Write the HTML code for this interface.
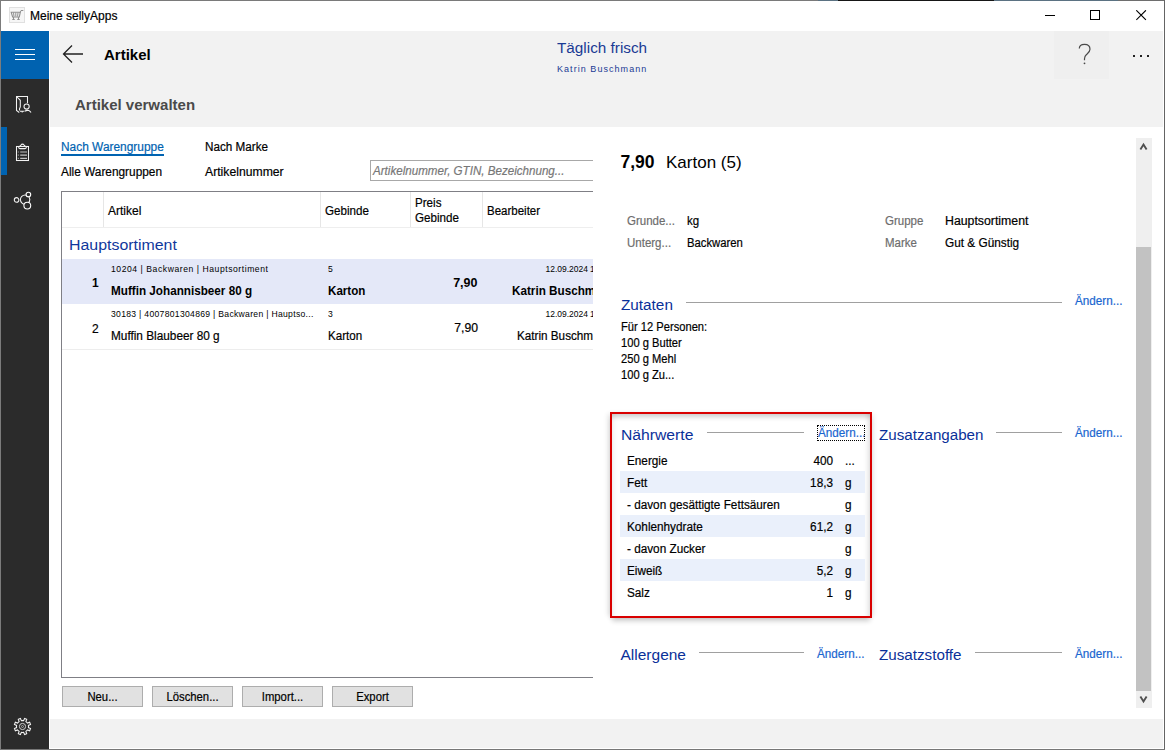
<!DOCTYPE html>
<html><head><meta charset="utf-8"><style>
html,body{margin:0;padding:0;width:1165px;height:750px;overflow:hidden;background:#fff;position:relative}
.t{position:absolute;white-space:nowrap;font-family:"Liberation Sans", sans-serif;line-height:normal}
.s{-webkit-text-stroke:0.2px currentColor}
svg{display:block}
</style></head><body>
<div style="position:absolute;left:0px;top:0px;width:1165px;height:750px;background:#ffffff;"></div>
<div style="position:absolute;left:50px;top:31px;width:1113px;height:96px;background:#f2f2f2;"></div>
<div style="position:absolute;left:50px;top:719px;width:1113px;height:29px;background:#f2f2f2;"></div>
<div style="position:absolute;left:0px;top:0px;width:818px;height:1px;background:#7a7a7a;"></div>
<div style="position:absolute;left:818px;top:0px;width:20px;height:1px;background:#5b7282;"></div>
<div style="position:absolute;left:838px;top:0px;width:156px;height:1px;background:#161616;"></div>
<div style="position:absolute;left:994px;top:0px;width:124px;height:1px;background:#5b7282;"></div>
<div style="position:absolute;left:1118px;top:0px;width:47px;height:1px;background:#6e6e6e;"></div>
<div style="position:absolute;left:0px;top:0px;width:1px;height:750px;background:#7c7c7c;"></div>
<div style="position:absolute;left:1164px;top:0px;width:1px;height:750px;background:#646464;"></div>
<div style="position:absolute;left:0px;top:749px;width:1165px;height:1px;background:#777777;"></div>
<svg style="position:absolute;left:9px;top:7px;" width="16" height="16" viewBox="0 0 16 16"><rect x="0.5" y="0.5" width="15" height="15" fill="#f6f6f6" stroke="#e0e0e0"/><path d="M2.2 5.2 L11.3 5.2 L10.3 10 L3.6 10 Z" fill="none" stroke="#8f8f8f" stroke-width="1.1"/><path d="M4.5 5.5 L5 9.5 M6.8 5.5 L6.8 9.5 M9 5.5 L8.6 9.5 M11.2 5.5 L12 3.5 L14.3 3.5" stroke="#8f8f8f" stroke-width="1" fill="none"/><path d="M4.5 10 L4.5 12.3 M9.5 10 L9.5 12.3 M3.3 12.5 L5.7 12.5 M8.3 12.5 L10.7 12.5" stroke="#8f8f8f" stroke-width="1.1" fill="none"/></svg>
<div class="t s" style="top:9px;font-size:12.5px;font-weight:400;color:#000;left:30px;transform-origin:0 0;transform:scaleX(0.9600);">Meine sellyApps</div>
<div style="position:absolute;left:1045px;top:15px;width:10px;height:1px;background:#000;"></div>
<svg style="position:absolute;left:1090px;top:10px;" width="11" height="11" viewBox="0 0 11 11"><rect x="0.5" y="0.5" width="9" height="9" fill="none" stroke="#000" stroke-width="1"/></svg>
<svg style="position:absolute;left:1136px;top:10px;" width="11" height="11" viewBox="0 0 11 11"><path d="M0.3 0.3 L9.9 9.9 M9.9 0.3 L0.3 9.9" stroke="#000" stroke-width="1.15" fill="none"/></svg>
<div style="position:absolute;left:1px;top:31px;width:48px;height:48px;background:#0062b0;"></div>
<div style="position:absolute;left:1px;top:79px;width:48px;height:670px;background:#2b2b2b;"></div>
<div style="position:absolute;left:15px;top:49px;width:20px;height:1px;background:#ffffff;"></div>
<div style="position:absolute;left:15px;top:54px;width:20px;height:1px;background:#ffffff;"></div>
<div style="position:absolute;left:15px;top:59px;width:20px;height:1px;background:#ffffff;"></div>
<div style="position:absolute;left:1px;top:127px;width:6px;height:48px;background:#0063b1;"></div>
<svg style="position:absolute;left:15px;top:95px;" width="18" height="19" viewBox="0 0 18 19"><path d="M12.5 8.3 L12.5 1.5 L1.5 1.5 L1.5 15.5 L4.3 17.5 M2 2 L5.3 5.3 L5.3 12 L4.5 13.8 L4.5 15.6 M5 16.3 L7.2 16.3 L7.2 17.5 M7.2 16.3 L9.2 16.3" stroke="#f2f2f2" stroke-width="1.05" fill="none"/><circle cx="11.6" cy="11.5" r="2.6" stroke="#f2f2f2" stroke-width="1.05" fill="none"/><path d="M9.6 16.2 Q11.8 15 13.8 15.5 Q15.2 16 16 17.6" stroke="#f2f2f2" stroke-width="1.05" fill="none"/></svg>
<svg style="position:absolute;left:15px;top:143px;" width="16" height="20" viewBox="0 0 16 20"><rect x="1.5" y="3.5" width="12" height="14" stroke="#f2f2f2" stroke-width="1.05" fill="none"/><path d="M3.5 3.5 Q5.3 3.5 5.8 2.2 Q7.5 0 9.2 2.2 Q9.7 3.5 11.5 3.5" stroke="#f2f2f2" stroke-width="1.05" fill="none"/><path d="M3.6 4 Q3.6 5.6 5 5.6 L10 5.6 Q11.4 5.6 11.4 4" stroke="#f2f2f2" stroke-width="1.05" fill="none"/><path d="M5.2 9 L12 9 M5.2 12.2 L12 12.2 M5.2 15.3 L12 15.3" stroke="#c4c4c4" stroke-width="1.2" fill="none"/><path d="M2.8 9 L3.8 9 M2.8 12.2 L3.8 12.2 M2.8 15.3 L3.8 15.3" stroke="#aaaaaa" stroke-width="1.2" fill="none"/></svg>
<svg style="position:absolute;left:13px;top:191px;" width="20" height="20" viewBox="0 0 20 20"><circle cx="3.6" cy="8.9" r="2.3" stroke="#f2f2f2" stroke-width="1.05" fill="none"/><circle cx="12.1" cy="8.6" r="4.7" stroke="#f2f2f2" stroke-width="1.05" fill="none"/><circle cx="15.4" cy="3.5" r="2.3" stroke="#ffffff" stroke-width="1.1" fill="#2b2b2b"/><circle cx="14.3" cy="14.6" r="3.4" stroke="#ffffff" stroke-width="1.1" fill="#2b2b2b"/></svg>
<svg style="position:absolute;left:13px;top:717px;" width="19" height="19" viewBox="0 0 19 19"><polygon points="9.50,3.50 10.59,3.60 11.58,1.46 13.71,2.35 12.90,4.56 13.74,5.26 14.44,6.10 16.65,5.29 17.54,7.42 15.40,8.41 15.50,9.50 15.40,10.59 17.54,11.58 16.65,13.71 14.44,12.90 13.74,13.74 12.90,14.44 13.71,16.65 11.58,17.54 10.59,15.40 9.50,15.50 8.41,15.40 7.42,17.54 5.29,16.65 6.10,14.44 5.26,13.74 4.56,12.90 2.35,13.71 1.46,11.58 3.60,10.59 3.50,9.50 3.60,8.41 1.46,7.42 2.35,5.29 4.56,6.10 5.26,5.26 6.10,4.56 5.29,2.35 7.42,1.46 8.41,3.60" stroke="#f2f2f2" stroke-width="1.05" fill="none"/><circle cx="9.5" cy="9.5" r="3.1" stroke="#d0d0d0" stroke-width="1" fill="none"/><circle cx="9.5" cy="9.5" r="1" stroke="#bbbbbb" stroke-width="0.8" fill="none"/></svg>
<svg style="position:absolute;left:62px;top:44px;" width="23" height="21" viewBox="0 0 23 21"><path d="M1.5 10 L21 10 M10 1.5 L1.5 10 L10 18.5" stroke="#222" stroke-width="1.3" fill="none"/></svg>
<div class="t" style="top:46px;font-size:15px;font-weight:700;color:#000;left:104px;transform-origin:0 0;">Artikel</div>
<div class="t" style="top:39px;font-size:15.5px;font-weight:400;color:#1a3a94;left:557px;transform-origin:0 0;transform:scaleX(0.9871);">Täglich frisch</div>
<div class="t" style="top:64px;font-size:9px;font-weight:400;color:#1a3a94;letter-spacing:1.050px;left:557px;transform-origin:0 0;">Katrin Buschmann</div>
<div style="position:absolute;left:1054px;top:31px;width:55px;height:48px;background:#efefef;"></div>
<svg style="position:absolute;left:1074px;top:40px;" width="22" height="28" viewBox="0 0 22 28"><path d="M5.3 8.5 C5.3 5.5 7.5 4.3 10.5 4.3 C13.8 4.3 16 6.2 16 9.2 C16 11.8 14.3 13 12.5 14.5 C11 15.8 10.5 17 10.5 18.8 L10.5 20.3" stroke="#4a4a4a" stroke-width="1.2" fill="none"/><circle cx="10.5" cy="23.3" r="0.9" fill="#4a4a4a"/></svg>
<div style="position:absolute;left:1133px;top:55px;width:2px;height:2px;background:#222;"></div>
<div style="position:absolute;left:1140px;top:55px;width:2px;height:2px;background:#222;"></div>
<div style="position:absolute;left:1147px;top:55px;width:2px;height:2px;background:#222;"></div>
<div class="t" style="top:96px;font-size:15px;font-weight:700;color:#4a4a4a;left:75px;transform-origin:0 0;">Artikel verwalten</div>
<div class="t s" style="top:140px;font-size:12.5px;font-weight:400;color:#0063b1;left:61px;transform-origin:0 0;transform:scaleX(0.9520);">Nach Warengruppe</div>
<div style="position:absolute;left:61px;top:154px;width:103px;height:2px;background:#0063b1;"></div>
<div class="t s" style="top:140px;font-size:12.5px;font-weight:400;color:#000;left:205px;transform-origin:0 0;transform:scaleX(0.9360);">Nach Marke</div>
<div class="t s" style="top:165px;font-size:12.5px;font-weight:400;color:#000;left:61px;transform-origin:0 0;transform:scaleX(0.9480);">Alle Warengruppen</div>
<div class="t s" style="top:165px;font-size:12.5px;font-weight:400;color:#000;left:205px;transform-origin:0 0;transform:scaleX(0.9760);">Artikelnummer</div>
<div style="position:absolute;left:0;top:0;width:593px;height:750px;overflow:hidden">
<div style="position:absolute;left:370px;top:160px;width:230px;height:21px;background:#ffffff;box-sizing:border-box;border:1px solid #a8a8a8;"></div>
<div class="t s" style="top:164px;font-size:12.5px;font-weight:400;color:#777;left:373px;transform-origin:0 0;transform:scaleX(0.9280);font-style:italic;">Artikelnummer, GTIN, Bezeichnung...</div>
<div style="position:absolute;left:61px;top:191px;width:600px;height:487px;background:#ffffff;box-sizing:border-box;border:1px solid #7f7f85;"></div>
<div style="position:absolute;left:103px;top:192px;width:1px;height:35px;background:#e6e6e6;"></div>
<div style="position:absolute;left:320px;top:192px;width:1px;height:35px;background:#e6e6e6;"></div>
<div style="position:absolute;left:410px;top:192px;width:1px;height:35px;background:#e6e6e6;"></div>
<div style="position:absolute;left:482px;top:192px;width:1px;height:35px;background:#e6e6e6;"></div>
<div style="position:absolute;left:62px;top:227px;width:540px;height:1px;background:#eeeeee;"></div>
<div class="t s" style="top:204px;font-size:12.5px;font-weight:400;color:#000;left:108px;transform-origin:0 0;transform:scaleX(0.9600);">Artikel</div>
<div class="t s" style="top:204px;font-size:12.5px;font-weight:400;color:#000;left:325px;transform-origin:0 0;transform:scaleX(0.9280);">Gebinde</div>
<div class="t s" style="top:196px;font-size:12.5px;font-weight:400;color:#000;left:415px;transform-origin:0 0;transform:scaleX(0.9280);">Preis</div>
<div class="t s" style="top:211px;font-size:12.5px;font-weight:400;color:#000;left:415px;transform-origin:0 0;transform:scaleX(0.9280);">Gebinde</div>
<div class="t s" style="top:204px;font-size:12.5px;font-weight:400;color:#000;left:487px;transform-origin:0 0;transform:scaleX(0.9200);">Bearbeiter</div>
<div class="t" style="top:236px;font-size:15.5px;font-weight:400;color:#0f379c;left:69px;transform-origin:0 0;transform:scaleX(1.0258);">Hauptsortiment</div>
<div style="position:absolute;left:62px;top:259px;width:540px;height:45px;background:#e4e8f8;"></div>
<div style="position:absolute;left:62px;top:349px;width:540px;height:1px;background:#ededed;"></div>
<div class="t" style="top:276px;font-size:12.5px;font-weight:700;color:#000;left:92px;transform-origin:0 0;transform:scaleX(0.9600);">1</div>
<div class="t" style="top:263px;font-size:9.8px;font-weight:400;color:#000;letter-spacing:0.627px;left:111px;transform-origin:0 0;transform:scaleX(0.8776);">10204 | Backwaren | Hauptsortiment</div>
<div class="t" style="top:284px;font-size:12.5px;font-weight:700;color:#000;left:111px;transform-origin:0 0;transform:scaleX(0.9360);">Muffin Johannisbeer 80 g</div>
<div class="t" style="top:263px;font-size:9.8px;font-weight:400;color:#000;left:328px;transform-origin:0 0;transform:scaleX(0.8776);">5</div>
<div class="t" style="top:284px;font-size:12.5px;font-weight:700;color:#000;left:328px;transform-origin:0 0;transform:scaleX(0.9280);">Karton</div>
<div class="t" style="top:276px;font-size:12.5px;font-weight:700;color:#000;left:-22.5px;width:500px;text-align:right;transform-origin:100% 0;">7,90</div>
<div class="t" style="top:263px;font-size:9.8px;font-weight:400;color:#000;left:87.5px;width:500px;text-align:right;transform-origin:100% 0;transform:scaleX(0.8673);">12.09.2024</div>
<div class="t" style="left:590px;top:264px;font-size:8.5px;">1</div>
<div class="t" style="top:284px;font-size:12.5px;font-weight:700;color:#000;left:512px;transform-origin:0 0;transform:scaleX(0.9360);">Katrin Buschmann</div>
<div class="t s" style="top:322px;font-size:12.5px;font-weight:400;color:#000;left:92px;transform-origin:0 0;transform:scaleX(0.9600);">2</div>
<div class="t" style="top:308px;font-size:9.8px;font-weight:400;color:#000;letter-spacing:0.342px;left:111px;transform-origin:0 0;transform:scaleX(0.8776);">30183 | 4007801304869 | Backwaren | Hauptso...</div>
<div class="t s" style="top:329px;font-size:12.5px;font-weight:400;color:#000;left:111px;transform-origin:0 0;transform:scaleX(0.9440);">Muffin Blaubeer 80 g</div>
<div class="t" style="top:308px;font-size:9.8px;font-weight:400;color:#000;left:328px;transform-origin:0 0;transform:scaleX(0.8776);">3</div>
<div class="t s" style="top:329px;font-size:12.5px;font-weight:400;color:#000;left:328px;transform-origin:0 0;transform:scaleX(0.9280);">Karton</div>
<div class="t s" style="top:321px;font-size:12.5px;font-weight:400;color:#000;left:-22.5px;width:500px;text-align:right;transform-origin:100% 0;transform:scaleX(0.9760);">7,90</div>
<div class="t" style="top:308px;font-size:9.8px;font-weight:400;color:#000;left:87.5px;width:500px;text-align:right;transform-origin:100% 0;transform:scaleX(0.8673);">12.09.2024</div>
<div class="t" style="left:590px;top:309px;font-size:8.5px;">1</div>
<div class="t s" style="top:329px;font-size:12.5px;font-weight:400;color:#000;left:516.5px;transform-origin:0 0;transform:scaleX(0.9360);">Katrin Buschmann</div>
</div>
<div style="position:absolute;left:62px;top:686px;width:81px;height:21px;background:#e1e1e1;box-sizing:border-box;border:1px solid #adadad;"></div>
<div class="t s" style="top:690px;font-size:12.5px;font-weight:400;color:#000;left:62.0px;width:81px;text-align:center;transform-origin:50% 0;transform:scaleX(0.9040);">Neu...</div>
<div style="position:absolute;left:152px;top:686px;width:81px;height:21px;background:#e1e1e1;box-sizing:border-box;border:1px solid #adadad;"></div>
<div class="t s" style="top:690px;font-size:12.5px;font-weight:400;color:#000;left:152.0px;width:81px;text-align:center;transform-origin:50% 0;transform:scaleX(0.9040);">Löschen...</div>
<div style="position:absolute;left:242px;top:686px;width:81px;height:21px;background:#e1e1e1;box-sizing:border-box;border:1px solid #adadad;"></div>
<div class="t s" style="top:690px;font-size:12.5px;font-weight:400;color:#000;left:242.0px;width:81px;text-align:center;transform-origin:50% 0;transform:scaleX(0.9040);">Import...</div>
<div style="position:absolute;left:332px;top:686px;width:81px;height:21px;background:#e1e1e1;box-sizing:border-box;border:1px solid #adadad;"></div>
<div class="t s" style="top:690px;font-size:12.5px;font-weight:400;color:#000;left:332.0px;width:81px;text-align:center;transform-origin:50% 0;transform:scaleX(0.9040);">Export</div>
<div class="t" style="top:152px;font-size:17.5px;font-weight:700;color:#000;left:620.5px;transform-origin:0 0;">7,90</div>
<div class="t" style="top:153px;font-size:17px;font-weight:400;color:#000;left:666px;transform-origin:0 0;">Karton (5)</div>
<div class="t s" style="top:214px;font-size:12.5px;font-weight:400;color:#6d6d6d;left:626.5px;transform-origin:0 0;transform:scaleX(0.9200);">Grunde...</div>
<div class="t s" style="top:214px;font-size:12.5px;font-weight:400;color:#000;left:686.5px;transform-origin:0 0;transform:scaleX(0.9200);">kg</div>
<div class="t s" style="top:236px;font-size:12.5px;font-weight:400;color:#6d6d6d;left:626.5px;transform-origin:0 0;transform:scaleX(0.9200);">Unterg...</div>
<div class="t s" style="top:236px;font-size:12.5px;font-weight:400;color:#000;left:686.5px;transform-origin:0 0;transform:scaleX(0.9040);">Backwaren</div>
<div class="t s" style="top:214px;font-size:12.5px;font-weight:400;color:#6d6d6d;left:884.5px;transform-origin:0 0;transform:scaleX(0.9200);">Gruppe</div>
<div class="t s" style="top:214px;font-size:12.5px;font-weight:400;color:#000;left:944.5px;transform-origin:0 0;transform:scaleX(0.9840);">Hauptsortiment</div>
<div class="t s" style="top:236px;font-size:12.5px;font-weight:400;color:#6d6d6d;left:884.5px;transform-origin:0 0;transform:scaleX(0.9200);">Marke</div>
<div class="t s" style="top:236px;font-size:12.5px;font-weight:400;color:#000;left:944.5px;transform-origin:0 0;transform:scaleX(0.9440);">Gut &amp; Günstig</div>
<div class="t" style="top:296px;font-size:15.5px;font-weight:400;color:#0a3099;left:620.5px;transform-origin:0 0;transform:scaleX(0.9871);">Zutaten</div>
<div style="position:absolute;left:686px;top:302px;width:376px;height:1px;background:#a0a0a0;"></div>
<div class="t s" style="top:294px;font-size:12.5px;font-weight:400;color:#1a66d0;left:1075px;transform-origin:0 0;transform:scaleX(0.9360);">Ändern...</div>
<div class="t s" style="top:320px;font-size:12.5px;font-weight:400;color:#000;left:620.5px;transform-origin:0 0;transform:scaleX(0.8920);">Für 12 Personen:</div>
<div class="t s" style="top:336px;font-size:12.5px;font-weight:400;color:#000;left:620.5px;transform-origin:0 0;transform:scaleX(0.8920);">100 g Butter</div>
<div class="t s" style="top:352px;font-size:12.5px;font-weight:400;color:#000;left:620.5px;transform-origin:0 0;transform:scaleX(0.8920);">250 g Mehl</div>
<div class="t s" style="top:368px;font-size:12.5px;font-weight:400;color:#000;left:620.5px;transform-origin:0 0;transform:scaleX(0.8920);">100 g Zu...</div>
<div style="position:absolute;left:610px;top:412px;width:262px;height:206px;background:#ffffff;box-sizing:border-box;border:2px solid #d90000;box-shadow:inset 0 6px 5px -3px rgba(0,0,0,0.2), inset -6px 0 5px -4px rgba(0,0,0,0.12), inset 6px 0 5px -4px rgba(0,0,0,0.06), -4px 0 5px -2px rgba(0,0,0,0.12), 0 5px 5px -2px rgba(0,0,0,0.2), 4px 0 5px -2px rgba(0,0,0,0.08);"></div>
<div class="t" style="top:426px;font-size:15.5px;font-weight:400;color:#0a3099;left:621px;transform-origin:0 0;transform:scaleX(1.0129);">Nährwerte</div>
<div style="position:absolute;left:707px;top:432px;width:97px;height:1px;background:#a0a0a0;"></div>
<div class="t s" style="top:426px;font-size:12.5px;font-weight:400;color:#1a66d0;left:818px;transform-origin:0 0;transform:scaleX(0.9360);">Ändern...</div>
<div style="position:absolute;left:817px;top:425px;width:48px;height:16px;background:transparent;box-sizing:border-box;border:1px dotted #000;"></div>
<div class="t s" style="top:454px;font-size:12.5px;font-weight:400;color:#000;left:626.5px;transform-origin:0 0;transform:scaleX(0.9400);">Energie</div>
<div class="t s" style="top:454px;font-size:12.5px;font-weight:400;color:#000;left:332.5px;width:500px;text-align:right;transform-origin:100% 0;transform:scaleX(0.9400);">400</div>
<div class="t s" style="top:454px;font-size:12.5px;font-weight:400;color:#000;left:845px;transform-origin:0 0;transform:scaleX(0.9400);">...</div>
<div style="position:absolute;left:620px;top:471px;width:245px;height:22px;background:#eaf0fb;"></div>
<div class="t s" style="top:476px;font-size:12.5px;font-weight:400;color:#000;left:626.5px;transform-origin:0 0;transform:scaleX(0.9400);">Fett</div>
<div class="t s" style="top:476px;font-size:12.5px;font-weight:400;color:#000;left:332.5px;width:500px;text-align:right;transform-origin:100% 0;transform:scaleX(0.9400);">18,3</div>
<div class="t s" style="top:476px;font-size:12.5px;font-weight:400;color:#000;left:845px;transform-origin:0 0;transform:scaleX(0.9400);">g</div>
<div class="t s" style="top:498px;font-size:12.5px;font-weight:400;color:#000;left:626.5px;transform-origin:0 0;transform:scaleX(0.9400);">- davon gesättigte Fettsäuren</div>
<div class="t s" style="top:498px;font-size:12.5px;font-weight:400;color:#000;left:845px;transform-origin:0 0;transform:scaleX(0.9400);">g</div>
<div style="position:absolute;left:620px;top:515px;width:245px;height:22px;background:#eaf0fb;"></div>
<div class="t s" style="top:520px;font-size:12.5px;font-weight:400;color:#000;left:626.5px;transform-origin:0 0;transform:scaleX(0.9400);">Kohlenhydrate</div>
<div class="t s" style="top:520px;font-size:12.5px;font-weight:400;color:#000;left:332.5px;width:500px;text-align:right;transform-origin:100% 0;transform:scaleX(0.9400);">61,2</div>
<div class="t s" style="top:520px;font-size:12.5px;font-weight:400;color:#000;left:845px;transform-origin:0 0;transform:scaleX(0.9400);">g</div>
<div class="t s" style="top:542px;font-size:12.5px;font-weight:400;color:#000;left:626.5px;transform-origin:0 0;transform:scaleX(0.9400);">- davon Zucker</div>
<div class="t s" style="top:542px;font-size:12.5px;font-weight:400;color:#000;left:845px;transform-origin:0 0;transform:scaleX(0.9400);">g</div>
<div style="position:absolute;left:620px;top:559px;width:245px;height:22px;background:#eaf0fb;"></div>
<div class="t s" style="top:564px;font-size:12.5px;font-weight:400;color:#000;left:626.5px;transform-origin:0 0;transform:scaleX(0.9400);">Eiweiß</div>
<div class="t s" style="top:564px;font-size:12.5px;font-weight:400;color:#000;left:332.5px;width:500px;text-align:right;transform-origin:100% 0;transform:scaleX(0.9400);">5,2</div>
<div class="t s" style="top:564px;font-size:12.5px;font-weight:400;color:#000;left:845px;transform-origin:0 0;transform:scaleX(0.9400);">g</div>
<div class="t s" style="top:586px;font-size:12.5px;font-weight:400;color:#000;left:626.5px;transform-origin:0 0;transform:scaleX(0.9400);">Salz</div>
<div class="t s" style="top:586px;font-size:12.5px;font-weight:400;color:#000;left:332.5px;width:500px;text-align:right;transform-origin:100% 0;transform:scaleX(0.9400);">1</div>
<div class="t s" style="top:586px;font-size:12.5px;font-weight:400;color:#000;left:845px;transform-origin:0 0;transform:scaleX(0.9400);">g</div>
<div class="t" style="top:426px;font-size:15.5px;font-weight:400;color:#0a3099;left:878.5px;transform-origin:0 0;transform:scaleX(0.9774);">Zusatzangaben</div>
<div style="position:absolute;left:996px;top:432px;width:66px;height:1px;background:#a0a0a0;"></div>
<div class="t s" style="top:426px;font-size:12.5px;font-weight:400;color:#1a66d0;left:1075px;transform-origin:0 0;transform:scaleX(0.9360);">Ändern...</div>
<div class="t" style="top:646px;font-size:15.5px;font-weight:400;color:#0a3099;left:620.5px;transform-origin:0 0;">Allergene</div>
<div style="position:absolute;left:699px;top:652px;width:105px;height:1px;background:#a0a0a0;"></div>
<div class="t s" style="top:647px;font-size:12.5px;font-weight:400;color:#1a66d0;left:817px;transform-origin:0 0;transform:scaleX(0.9360);">Ändern...</div>
<div class="t" style="top:646px;font-size:15.5px;font-weight:400;color:#0a3099;left:878.5px;transform-origin:0 0;transform:scaleX(0.9806);">Zusatzstoffe</div>
<div style="position:absolute;left:975px;top:652px;width:87px;height:1px;background:#a0a0a0;"></div>
<div class="t s" style="top:647px;font-size:12.5px;font-weight:400;color:#1a66d0;left:1075px;transform-origin:0 0;transform:scaleX(0.9360);">Ändern...</div>
<div style="position:absolute;left:1136px;top:138px;width:16px;height:570px;background:#efefef;"></div>
<div style="position:absolute;left:1136px;top:247px;width:15px;height:444px;background:#c2c2c2;"></div>
<svg style="position:absolute;left:1139px;top:142px;" width="10" height="9" viewBox="0 0 10 9"><path d="M1.4 7.4 L4.5 2.6 L7.6 7.4" stroke="#4f4f4f" stroke-width="1.9" fill="none"/></svg>
<svg style="position:absolute;left:1139px;top:695px;" width="10" height="9" viewBox="0 0 10 9"><path d="M1.4 1.6 L4.5 6.4 L7.6 1.6" stroke="#4f4f4f" stroke-width="1.9" fill="none"/></svg>
</body></html>
